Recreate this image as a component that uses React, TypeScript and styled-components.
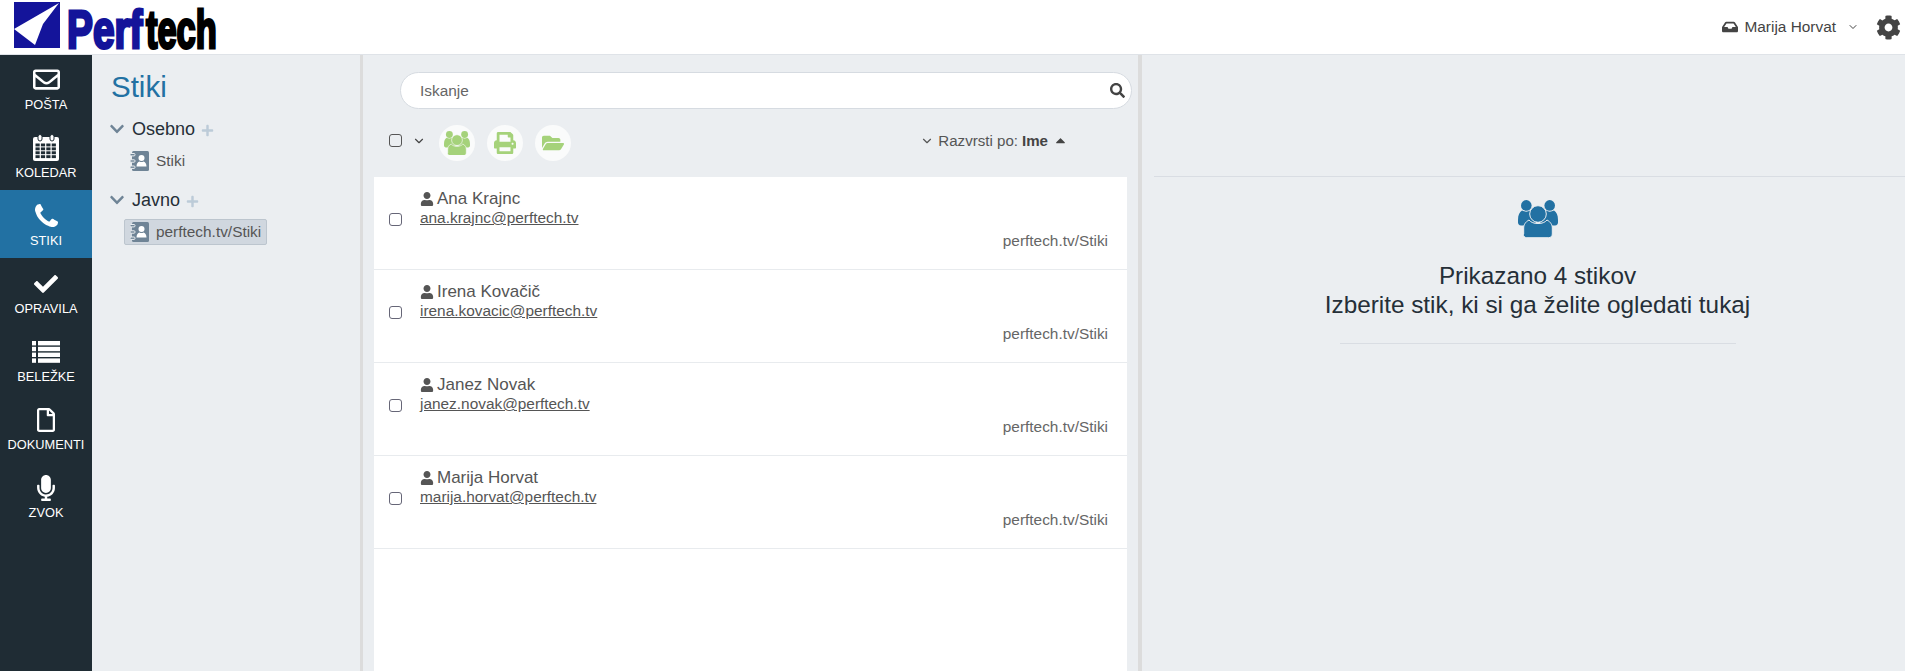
import * as React from 'react';
import styled, { createGlobalStyle } from 'styled-components';
import {
  FaRegEnvelope,
  FaCheck,
  FaRegFile,
  FaMicrophone,
  FaInbox,
  FaCog,
  FaSearch,
  FaUser,
  FaPrint,
  FaFolderOpen,
  FaChevronDown,
  FaPlus,
  FaCaretUp
} from 'react-icons/fa';
import { FiChevronDown } from 'react-icons/fi';

const GlobalStyle = createGlobalStyle`
  html, body {
    margin: 0;
    padding: 0;
    height: 100%;
    overflow: hidden;
    background: #ebeef1;
    font-family: "Liberation Sans", Arial, sans-serif;
    color: #555;
  }
  * {
    box-sizing: border-box;
  }
`;

const Page = styled.div`
  width: 1905px;
  height: 671px;
  display: flex;
  flex-direction: column;
  overflow: hidden;
`;

const Header = styled.header`
  height: 55px;
  flex: none;
  background: #fff;
  border-bottom: 1px solid #dfe3e8;
  display: flex;
  align-items: flex-start;
  justify-content: space-between;
`;

const LogoBox = styled.div`
  width: 240px;
  height: 54px;
  padding-left: 13px;
`;

const LogoSvg = styled.svg`
  display: block;
  overflow: visible;
`;

const UserBox = styled.div`
  display: flex;
  align-items: center;
  height: 54px;
  padding: 0 4px 0 0;
  font-size: 15.4px;
  color: #444;
`;

const UserName = styled.span`
  margin: 0 11px 0 6px;
`;

const GearIcon = styled(FaCog)`
  font-size: 25px;
  color: #444;
  margin-left: 17px;
`;

const Body = styled.div`
  flex: 1;
  display: flex;
  min-height: 0;
`;

const Sidebar = styled.nav`
  width: 92px;
  flex: none;
  background: #1f2c34;
`;

const NavItem = styled.div<{ $active?: boolean }>`
  height: 68px;
  display: flex;
  flex-direction: column;
  align-items: center;
  padding-top: 12px;
  color: #fff;
  font-size: 12.8px;
  background: ${p => (p.$active ? '#2271a3' : 'transparent')};
  &:first-child {
    height: 67px;
    padding-top: 11px;
  }
`;

const NavIcon = styled.div`
  height: 27px;
  display: flex;
  align-items: center;
  justify-content: center;
  font-size: 27px;
  margin-bottom: 4px;
`;

const FolderPane = styled.aside`
  width: 268px;
  flex: none;
  padding: 16px 0 0 17px;
`;

const FolderTitle = styled.h1`
  margin: 0 0 14px 2px;
  font-size: 29.5px;
  font-weight: 400;
  line-height: 32px;
  color: #2271a3;
`;

const Group = styled.div`
  margin-bottom: 14px;
`;

const GroupHead = styled.div`
  display: flex;
  align-items: center;
  height: 24px;
  font-size: 18px;
  color: #252f38;
`;

const GroupChevron = styled(FaChevronDown)`
  font-size: 16px;
  color: #6f8496;
  margin-right: 7px;
`;

const GroupPlus = styled(FaPlus)`
  font-size: 13px;
  color: #bccbd8;
  margin-left: 6px;
  margin-top: 3px;
`;

const Folder = styled.div<{ $selected?: boolean }>`
  display: flex;
  width: fit-content;
  align-items: center;
  gap: 7px;
  height: 26px;
  margin: 7px 0 0 15px;
  padding: 0 5px;
  font-size: 15.4px;
  color: #555;
  border-radius: 2px;
  background: ${p => (p.$selected ? '#d0d7df' : 'transparent')};
  border: 1px solid ${p => (p.$selected ? '#bcc5ce' : 'transparent')};
`;

const Splitter = styled.div<{ $width: number }>`
  width: ${p => p.$width}px;
  flex: none;
  background: #dcdcdc;
`;

const ListPane = styled.section`
  width: 775px;
  flex: none;
  display: flex;
  flex-direction: column;
  padding: 17px 0 0 11px;
`;

const SearchBar = styled.div`
  width: 732px;
  height: 37px;
  margin-left: 26px;
  flex: none;
  display: flex;
  align-items: center;
  justify-content: space-between;
  padding: 0 6px 0 19px;
  background: #fff;
  border: 1px solid #d6dbe1;
  border-radius: 19px;
  font-size: 15.4px;
  color: #666;
  svg {
    font-size: 15px;
    color: #444;
  }
`;

const Toolbar = styled.div`
  height: 68px;
  flex: none;
  display: flex;
  align-items: center;
  padding: 0 70px 0 15px;
`;

const SelectAll = styled.div`
  display: flex;
  align-items: center;
  margin: 0 13px 5px 0;
`;

const Check = styled.span`
  width: 13px;
  height: 13px;
  flex: none;
  display: block;
  background: transparent;
  border: 1px solid #555;
  border-radius: 3px;
`;

const SelectChevron = styled(FiChevronDown)`
  font-size: 14px;
  color: #444;
  margin-left: 10px;
`;

const RoundButton = styled.div`
  width: 36px;
  height: 36px;
  margin-right: 12px;
  display: flex;
  align-items: center;
  justify-content: center;
  background: #fafbfb;
  border-radius: 50%;
  color: #a5d27a;
  font-size: 22px;
`;

const SortBox = styled.div`
  margin: 0 0 5px auto;
  display: flex;
  align-items: center;
  font-size: 15.1px;
  color: #555;
  b {
    margin-left: 4px;
    color: #444;
  }
`;

const SortCaret = styled(FaCaretUp)`
  font-size: 15px;
  margin-left: 5px;
  color: #444;
`;

const List = styled.div`
  width: 753px;
  flex: 1;
  background: #fff;
`;

const Row = styled.div`
  height: 93px;
  display: flex;
  padding: 12px 19px 0 15px;
  border-bottom: 1px solid #e8ebee;
`;

const RowCheck = styled(Check)`
  margin: 24px 18px 0 0;
  border-color: #667;
  background: #fff;
`;

const RowMain = styled.div`
  flex: 1;
  min-width: 0;
`;

const Name = styled.div`
  display: flex;
  align-items: center;
  gap: 3px;
  height: 19px;
  font-size: 17px;
  color: #555;
  svg {
    font-size: 14px;
  }
`;

const Email = styled.a`
  display: block;
  font-size: 15.4px;
  line-height: 19px;
  color: #555;
  text-decoration: underline;
`;

const Source = styled.div`
  margin-top: 5px;
  text-align: right;
  font-size: 15.4px;
  line-height: 18px;
  color: #666;
`;

const DetailPane = styled.section`
  flex: 1;
  padding: 121px 0 0 12px;
`;

const DetailInner = styled.div`
  border-top: 1px solid #d9dde3;
  height: 100%;
  display: flex;
  flex-direction: column;
  align-items: center;
  padding: 23px 0 0 16px;
`;

const DetailText = styled.div`
  margin-top: 24px;
  width: 396px;
  padding-bottom: 24px;
  border-bottom: 1px solid #d9dde3;
  text-align: center;
  font-size: 24.3px;
  line-height: 28.5px;
  color: #252f38;
  white-space: nowrap;
`;

const Line = styled.div`
  margin: 0 -30px;
`;

const PhoneIcon = () => (
  <svg width="23" height="23" viewBox="0 0 1408 1408" fill="currentColor">
    <path d="M1408 1112q0 27-10 70.500t-21 68.500q-21 50-122 106-94 51-186 51-27 0-53-3.500t-57.500-12.500-47-14.500-55.500-20.500-49-18q-98-35-175-83-127-79-264-216t-216-264q-48-77-83-175-3-9-18-49t-20.500-55.500-14.500-47-12.500-57.500-3.500-53q0-92 51-186 56-101 106-122 25-11 68.500-21t70.500-10q14 0 21 3 18 6 53 76 11 19 30 54t35 63.500 31 53.500q3 4 17.500 25t21.500 35.500 7 28.500q0 20-28.500 50t-62 55-62 53-28.500 46q0 9 5 22.500t8.500 20.500 14 24 11.500 19q76 137 174 235t235 174q2 1 19 11.500t24 14 20.500 8.500 22.500 5q18 0 46-28.500t53-62 55-62 50-28.500q14 0 28.500 7t35.500 21.500 25 17.500q25 15 53.500 31t63.500 35 54 30q70 35 76 53 3 7 3 21z" />
  </svg>
);

const CalendarIcon = () => {
  const cells: React.ReactElement[] = [];
  for (let row = 0; row < 4; row++) {
    for (let col = 0; col < 4; col++) {
      cells.push(
        <rect key={`${row}-${col}`} x={2.5 + col * 5.4} y={9.5 + row * 3.9} width="4.2" height="2.9" fill="#1f2c34" />
      );
    }
  }
  return (
    <svg width="26" height="27" viewBox="0 0 26 27">
      <rect x="0" y="3" width="26" height="24" rx="2" fill="#fff" />
      {cells}
      <rect x="5" y="0.5" width="4" height="6.5" rx="2" fill="#fff" stroke="#1f2c34" strokeWidth="1" />
      <rect x="17" y="0.5" width="4" height="6.5" rx="2" fill="#fff" stroke="#1f2c34" strokeWidth="1" />
    </svg>
  );
};

const ListIcon = () => (
  <svg width="28" height="22" viewBox="0 0 28 22" fill="#fff">
    {[0, 5.8, 11.6, 17.4].map(y => (
      <React.Fragment key={y}>
        <rect x="0" y={y} width="4" height="4.4" />
        <rect x="6" y={y} width="22" height="4.4" />
      </React.Fragment>
    ))}
  </svg>
);

const BookIcon = () => (
  <svg width="19" height="20" viewBox="0 0 19 20" fill="#6f8496">
    <rect x="2" y="0" width="17" height="20" rx="1.5" />
    <rect x="0" y="2.5" width="5" height="2.4" rx="1" stroke="#ebeef1" strokeWidth="1" />
    <rect x="0" y="8.8" width="5" height="2.4" rx="1" stroke="#ebeef1" strokeWidth="1" />
    <rect x="0" y="15" width="5" height="2.4" rx="1" stroke="#ebeef1" strokeWidth="1" />
    <circle cx="11.5" cy="7" r="3" fill="#fff" />
    <path d="M6.5 15.5c0-3 1.500-4.500 3-5 1 .8 3 .8 4 0 1.500.5 3 2 3 5z" fill="#fff" />
  </svg>
);

const navItems = [
  { label: 'POŠTA', icon: <FaRegEnvelope /> },
  { label: 'KOLEDAR', icon: <CalendarIcon /> },
  { label: 'STIKI', icon: <PhoneIcon />, active: true },
  { label: 'OPRAVILA', icon: <FaCheck size={24} /> },
  { label: 'BELEŽKE', icon: <ListIcon /> },
  { label: 'DOKUMENTI', icon: <FaRegFile size={24} /> },
  { label: 'ZVOK', icon: <FaMicrophone size={26} /> }
];

const contacts = [
  { name: 'Ana Krajnc', email: 'ana.krajnc@perftech.tv' },
  { name: 'Irena Kovačič', email: 'irena.kovacic@perftech.tv' },
  { name: 'Janez Novak', email: 'janez.novak@perftech.tv' },
  { name: 'Marija Horvat', email: 'marija.horvat@perftech.tv' }
];

const Logo = () => (
  <LogoSvg width="210" height="54" viewBox="0 0 210 54">
    <rect x="1" y="2" width="46" height="46" fill="#14149a" />
    <path d="M46 3 L1 29 L22 45 L30 24 Z" fill="#fff" />
    <text
      transform="translate(54 48) scale(0.733 1)"
      fontFamily="Liberation Sans"
      fontWeight="700"
      fontSize="53"
      fill="#14149a"
      stroke="#14149a"
      strokeWidth="3"
    >
      Perf
    </text>
    <text
      transform="translate(133 48) scale(0.65 1)"
      fontFamily="Liberation Sans"
      fontWeight="700"
      fontSize="53"
      fill="#000"
      stroke="#000"
      strokeWidth="3"
    >
      tech
    </text>
  </LogoSvg>
);

const UsersIcon = ({ size, color, gap }: { size: number; color: string; gap: string }) => (
  <svg width={size} height={(size * 38) / 40} viewBox="0 0 40 38" fill={color}>
    <circle cx="8.3" cy="5.4" r="5.3" />
    <circle cx="31.7" cy="5.4" r="5.3" />
    <path d="M0 20c0-5 1.500-8 4-9.500 2.500 1.500 6 1.500 8 0l6 6v6l-10 3H3c-2 0-3-1.500-3-3z" />
    <path d="M40 20c0-5-1.500-8-4-9.500-2.500 1.500-6 1.500-8 0l-6 6v6l10 3h5c2 0 3-1.500 3-3z" />
    <circle cx="20" cy="14" r="8.3" stroke={gap} strokeWidth="1" />
    <path
      d="M5.700 34v-6c0-3 1.500-6 5.300-8 2 2.500 5 3.500 9 3.500s7-1 9-3.500c3.800 2 5.300 5 5.300 8v6c0 2-1.500 3.700-3.500 3.700h-22c-2 0-3.600-1.700-3.600-3.700z"
      stroke={gap}
      strokeWidth="1"
    />
  </svg>
);

export default function App() {
  return (
    <Page>
      <GlobalStyle />
      <Header>
        <LogoBox>
          <Logo />
        </LogoBox>
        <UserBox>
          <FaInbox size={16} />
          <UserName>Marija Horvat</UserName>
          <FiChevronDown size={12} />
          <GearIcon />
        </UserBox>
      </Header>
      <Body>
        <Sidebar>
          {navItems.map(item => (
            <NavItem key={item.label} $active={item.active}>
              <NavIcon>{item.icon}</NavIcon>
              {item.label}
            </NavItem>
          ))}
        </Sidebar>
        <FolderPane>
          <FolderTitle>Stiki</FolderTitle>
          <Group>
            <GroupHead>
              <GroupChevron />
              Osebno
              <GroupPlus />
            </GroupHead>
            <Folder>
              <BookIcon />
              Stiki
            </Folder>
          </Group>
          <Group>
            <GroupHead>
              <GroupChevron />
              Javno
              <GroupPlus />
            </GroupHead>
            <Folder $selected>
              <BookIcon />
              perftech.tv/Stiki
            </Folder>
          </Group>
        </FolderPane>
        <Splitter $width={3} />
        <ListPane>
          <SearchBar>
            Iskanje
            <FaSearch />
          </SearchBar>
          <Toolbar>
            <SelectAll>
              <Check />
              <SelectChevron />
            </SelectAll>
            <RoundButton>
              <UsersIcon size={26} color="#a5d27a" gap="#fafbfb" />
            </RoundButton>
            <RoundButton>
              <FaPrint />
            </RoundButton>
            <RoundButton>
              <FaFolderOpen />
            </RoundButton>
            <SortBox>
              <FiChevronDown size={14} />
              &nbsp;Razvrsti po:
              <b>Ime</b>
              <SortCaret />
            </SortBox>
          </Toolbar>
          <List>
            {contacts.map(contact => (
              <Row key={contact.email}>
                <RowCheck />
                <RowMain>
                  <Name>
                    <FaUser />
                    {contact.name}
                  </Name>
                  <Email>{contact.email}</Email>
                  <Source>perftech.tv/Stiki</Source>
                </RowMain>
              </Row>
            ))}
          </List>
        </ListPane>
        <Splitter $width={4} />
        <DetailPane>
          <DetailInner>
            <UsersIcon size={40} color="#2271a3" gap="#ebeef1" />
            <DetailText>
              <Line>Prikazano 4 stikov</Line>
              <Line>Izberite stik, ki si ga želite ogledati tukaj</Line>
            </DetailText>
          </DetailInner>
        </DetailPane>
      </Body>
    </Page>
  );
}
